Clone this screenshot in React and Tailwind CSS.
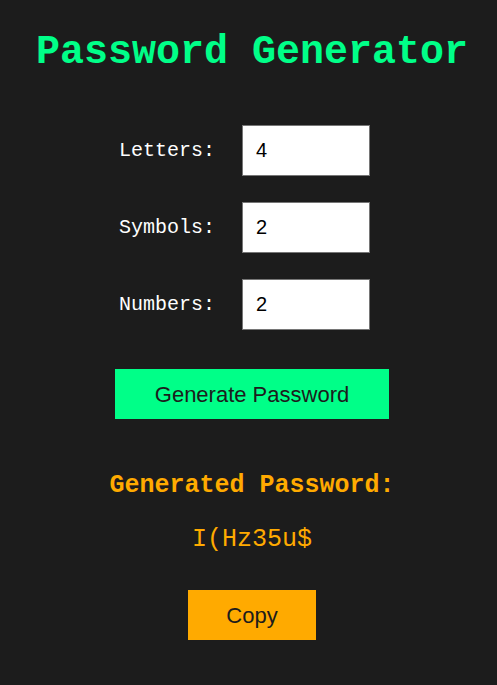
import React, { useState } from "react";

const mono = "font-['Courier_New','Liberation_Mono',monospace]";
const sans = "font-['Arial','Liberation_Sans',sans-serif]";
const input =
  "w-[128px] h-[51px] px-[13px] bg-white text-black text-[20px] border border-[#767676] outline-none " +
  sans;

export default function App() {
  const [form, setForm] = useState({ letters: "4", symbols: "2", numbers: "2" });
  const [password] = useState("I(Hz35u$");

  const onChange = (e) =>
    setForm((f) => ({ ...f, [e.target.name]: e.target.value }));

  const fields = [
    { name: "letters", label: "Letters:" },
    { name: "symbols", label: "Symbols:" },
    { name: "numbers", label: "Numbers:" },
  ];

  return (
    <div className="min-h-screen bg-[#1c1c1c] flex flex-col items-center pl-[7px] pt-[30px]">
      <h1 className={`${mono} text-[40px] leading-[45px] font-bold text-[#00ff88]`}>
        Password Generator
      </h1>

      <div className="flex flex-col gap-[26px] mt-[50px]">
        {fields.map((f) => (
          <div key={f.name} className="flex items-center pr-[15px]">
            <label htmlFor={f.name} className={`${mono} w-[123px] text-[20px] text-white`}>
              {f.label}
            </label>
            <input
              id={f.name}
              name={f.name}
              type="text"
              className={input}
              value={form[f.name]}
              onChange={onChange}
            />
          </div>
        ))}
      </div>

      <button
        className={`${sans} mt-[39px] w-[274px] h-[50px] bg-[#00ff88] text-[22px] text-[#1c1c1c]`}
      >
        Generate Password
      </button>

      <h2 className={`${mono} mt-[53px] text-[25px] leading-[28px] font-bold text-[#ffaa00]`}>
        Generated Password:
      </h2>

      <div className={`${mono} mt-[26px] text-[25px] leading-[28px] text-[#ffaa00]`}>
        {password}
      </div>

      <button
        className={`${sans} mt-[36px] w-[128px] h-[50px] bg-[#ffaa00] text-[22px] text-[#1c1c1c]`}
      >
        Copy
      </button>
    </div>
  );
}
